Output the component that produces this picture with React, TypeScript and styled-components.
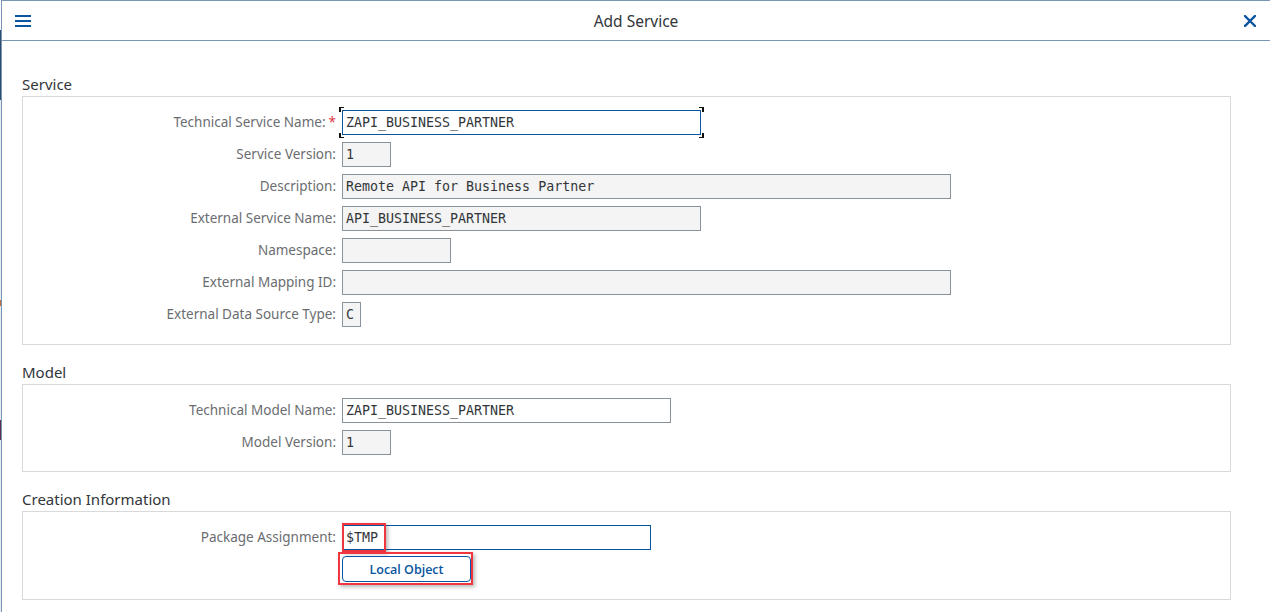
import React from 'react';
import styled, { createGlobalStyle } from 'styled-components';

const Global = createGlobalStyle`
  html, body { margin: 0; padding: 0; background: #ffffff; }
  body { font-family: "Noto Sans", "Liberation Sans", Arial, sans-serif; color: #32363a; }
  * { box-sizing: border-box; }
`;

const Page = styled.div`
  display: flex;
  width: 1270px;
  height: 612px;
  overflow: hidden;
`;

const BackdropEdge = styled.div`
  width: 1px;
  flex: none;
  background: linear-gradient(
    to bottom,
    #ffffff 0px, #ffffff 30px,
    #2f4a6a 30px, #2f4a6a 100px,
    #e6e9ee 100px, #e6e9ee 300px,
    #c0703a 300px, #c0703a 306px,
    #e6e9ee 306px, #e6e9ee 420px,
    #5a3050 420px, #5a3050 440px,
    #e6e9ee 440px, #e6e9ee 612px
  );
`;

const Dialog = styled.div`
  flex: 1;
  display: flex;
  flex-direction: column;
  border-left: 1px solid #7a96b6;
  border-top: 1px solid #7a96b6;
  background: #ffffff;
`;

const Header = styled.header`
  height: 40px;
  flex: none;
  display: grid;
  grid-template-columns: 60px 1fr 60px;
  align-items: center;
  border-bottom: 1px solid #7a96b6;
`;

const IconButton = styled.div<{ $align: 'start' | 'end' }>`
  display: flex;
  justify-content: ${(p) => (p.$align === 'start' ? 'flex-start' : 'flex-end')};
  align-items: center;
  padding: ${(p) => (p.$align === 'start' ? '0 0 0 13px' : '0 14px 0 0')};
  color: #0a55a0;
  svg { display: block; }
`;

const Title = styled.h1`
  margin: 0;
  font-size: 15.5px;
  font-weight: 400;
  text-align: center;
  color: #32363a;
  line-height: 20px;
`;

const Content = styled.main`
  flex: 1;
  padding: 33px 39px 0 20px;
  display: flex;
  flex-direction: column;
`;

const Section = styled.section`
  & + & { margin-top: 17px; }
`;

const SectionTitle = styled.h2`
  margin: 0 0 2px 0;
  font-size: 15px;
  font-weight: 400;
  line-height: 20px;
  color: #32363a;
`;

const Panel = styled.div<{ $pb: number }>`
  border: 1px solid #d9d9d9;
  padding: 9px 0 ${(p) => p.$pb}px 0;
`;

const Row = styled.div`
  display: grid;
  grid-template-columns: 313px 1fr;
  column-gap: 6px;
  align-items: center;
  height: 32px;
`;

const Label = styled.label`
  text-align: right;
  font-size: 13.5px;
  color: #6a6d70;
  white-space: nowrap;
`;

const Required = styled.span`
  color: #e0353f;
  margin-left: 3px;
`;

const FieldWrap = styled.div`
  position: relative;
  display: flex;
`;

const Field = styled.div<{ $width: number; $readOnlyLook?: boolean; $blue?: boolean }>`
  width: ${(p) => p.$width}px;
  height: 25px;
  padding: 0 3px;
  border: 1px solid ${(p) => (p.$blue ? '#0854a0' : '#89919a')};
  background: ${(p) => (p.$readOnlyLook ? '#f4f4f4' : '#ffffff')};
  font-family: "DejaVu Sans Mono", "Liberation Mono", monospace;
  font-size: 13.3px;
  line-height: 23px;
  color: #32363a;
  white-space: pre;
  overflow: hidden;
`;

const FocusHolder = styled.div<{ $width: number }>`
  position: relative;
  width: ${(p) => p.$width + 6}px;
  margin-left: -3px;
  height: 31px;
  display: flex;
  align-items: center;
  justify-content: center;
`;

const FocusFrame = styled.span`
  position: absolute;
  inset: 0;
  pointer-events: none;
  background:
    linear-gradient(#111, #111) left top / 5px 1px no-repeat,
    linear-gradient(#111, #111) left top / 2px 5px no-repeat,
    linear-gradient(#111, #111) right top / 5px 1px no-repeat,
    linear-gradient(#111, #111) right top / 2px 5px no-repeat,
    linear-gradient(#111, #111) left bottom / 5px 1px no-repeat,
    linear-gradient(#111, #111) left bottom / 2px 5px no-repeat,
    linear-gradient(#111, #111) right bottom / 5px 1px no-repeat,
    linear-gradient(#111, #111) right bottom / 2px 5px no-repeat;
`;

const Highlight = styled.span<{ $l: number; $t: number; $w: number; $h: number }>`
  position: absolute;
  left: ${(p) => p.$l}px;
  top: ${(p) => p.$t}px;
  width: ${(p) => p.$w}px;
  height: ${(p) => p.$h}px;
  border: 2.5px solid #f0373f;
  box-shadow: 2px 2px 4px rgba(0, 0, 0, 0.28);
  pointer-events: none;
`;

const ButtonWrap = styled.div`
  position: relative;
  display: flex;
  grid-column: 2;
`;

const Button = styled.button`
  width: 129px;
  height: 26px;
  border: 1px solid #0854a0;
  border-radius: 4px;
  background: #ffffff;
  color: #0854a0;
  font-family: "Open Sans", "Noto Sans", "Liberation Sans", Arial, sans-serif;
  font-size: 12.5px;
  font-weight: 600;
  padding: 0;
  cursor: pointer;
`;

type FieldDef = {
  label: string;
  value: string;
  width: number;
  readOnly?: boolean;
  required?: boolean;
  focused?: boolean;
};

const serviceFields: FieldDef[] = [
  { label: 'Technical Service Name:', value: 'ZAPI_BUSINESS_PARTNER', width: 359, required: true, focused: true },
  { label: 'Service Version:', value: '1', width: 49, readOnly: true },
  { label: 'Description:', value: 'Remote API for Business Partner', width: 609, readOnly: true },
  { label: 'External Service Name:', value: 'API_BUSINESS_PARTNER', width: 359, readOnly: true },
  { label: 'Namespace:', value: '', width: 109, readOnly: true },
  { label: 'External Mapping ID:', value: '', width: 609, readOnly: true },
  { label: 'External Data Source Type:', value: 'C', width: 19, readOnly: true },
];

const modelFields: FieldDef[] = [
  { label: 'Technical Model Name:', value: 'ZAPI_BUSINESS_PARTNER', width: 329 },
  { label: 'Model Version:', value: '1', width: 49, readOnly: true },
];

const FormRow: React.FC<{ f: FieldDef }> = ({ f }) => (
  <Row>
    <Label>
      {f.label}
      {f.required && <Required>*</Required>}
    </Label>
    <FieldWrap>
      {f.focused ? (
        <FocusHolder $width={f.width}>
          <Field $width={f.width} $blue>{f.value}</Field>
          <FocusFrame />
        </FocusHolder>
      ) : (
        <Field $width={f.width} $readOnlyLook={f.readOnly}>{f.value}</Field>
      )}
    </FieldWrap>
  </Row>
);

const MenuIcon = () => (
  <svg width="16" height="12" viewBox="0 0 16 12">
    <rect x="0" y="0" width="16" height="2" fill="currentColor" />
    <rect x="0" y="5" width="16" height="2" fill="currentColor" />
    <rect x="0" y="10" width="16" height="2" fill="currentColor" />
  </svg>
);

const CloseIcon = () => (
  <svg width="12" height="12" viewBox="0 0 12 12">
    <path d="M1 1 L11 11 M11 1 L1 11" stroke="currentColor" strokeWidth="2.4" strokeLinecap="square" />
  </svg>
);

export default function App() {
  return (
    <Page>
      <Global />
      <BackdropEdge />
      <Dialog>
        <Header>
          <IconButton $align="start"><MenuIcon /></IconButton>
          <Title>Add Service</Title>
          <IconButton $align="end"><CloseIcon /></IconButton>
        </Header>
        <Content>
          <Section>
            <SectionTitle>Service</SectionTitle>
            <Panel $pb={14}>
              {serviceFields.map((f) => <FormRow key={f.label} f={f} />)}
            </Panel>
          </Section>
          <Section>
            <SectionTitle>Model</SectionTitle>
            <Panel $pb={13}>
              {modelFields.map((f) => <FormRow key={f.label} f={f} />)}
            </Panel>
          </Section>
          <Section>
            <SectionTitle>Creation Information</SectionTitle>
            <Panel $pb={14}>
              <Row>
                <Label>Package Assignment:</Label>
                <FieldWrap>
                  <Field $width={309} $blue>$TMP</Field>
                  <Highlight $l={0} $t={-2} $w={44} $h={29} />
                </FieldWrap>
              </Row>
              <Row>
                <ButtonWrap>
                  <Button type="button">Local Object</Button>
                  <Highlight $l={-4} $t={-4} $w={135} $h={33} />
                </ButtonWrap>
              </Row>
            </Panel>
          </Section>
        </Content>
      </Dialog>
    </Page>
  );
}
